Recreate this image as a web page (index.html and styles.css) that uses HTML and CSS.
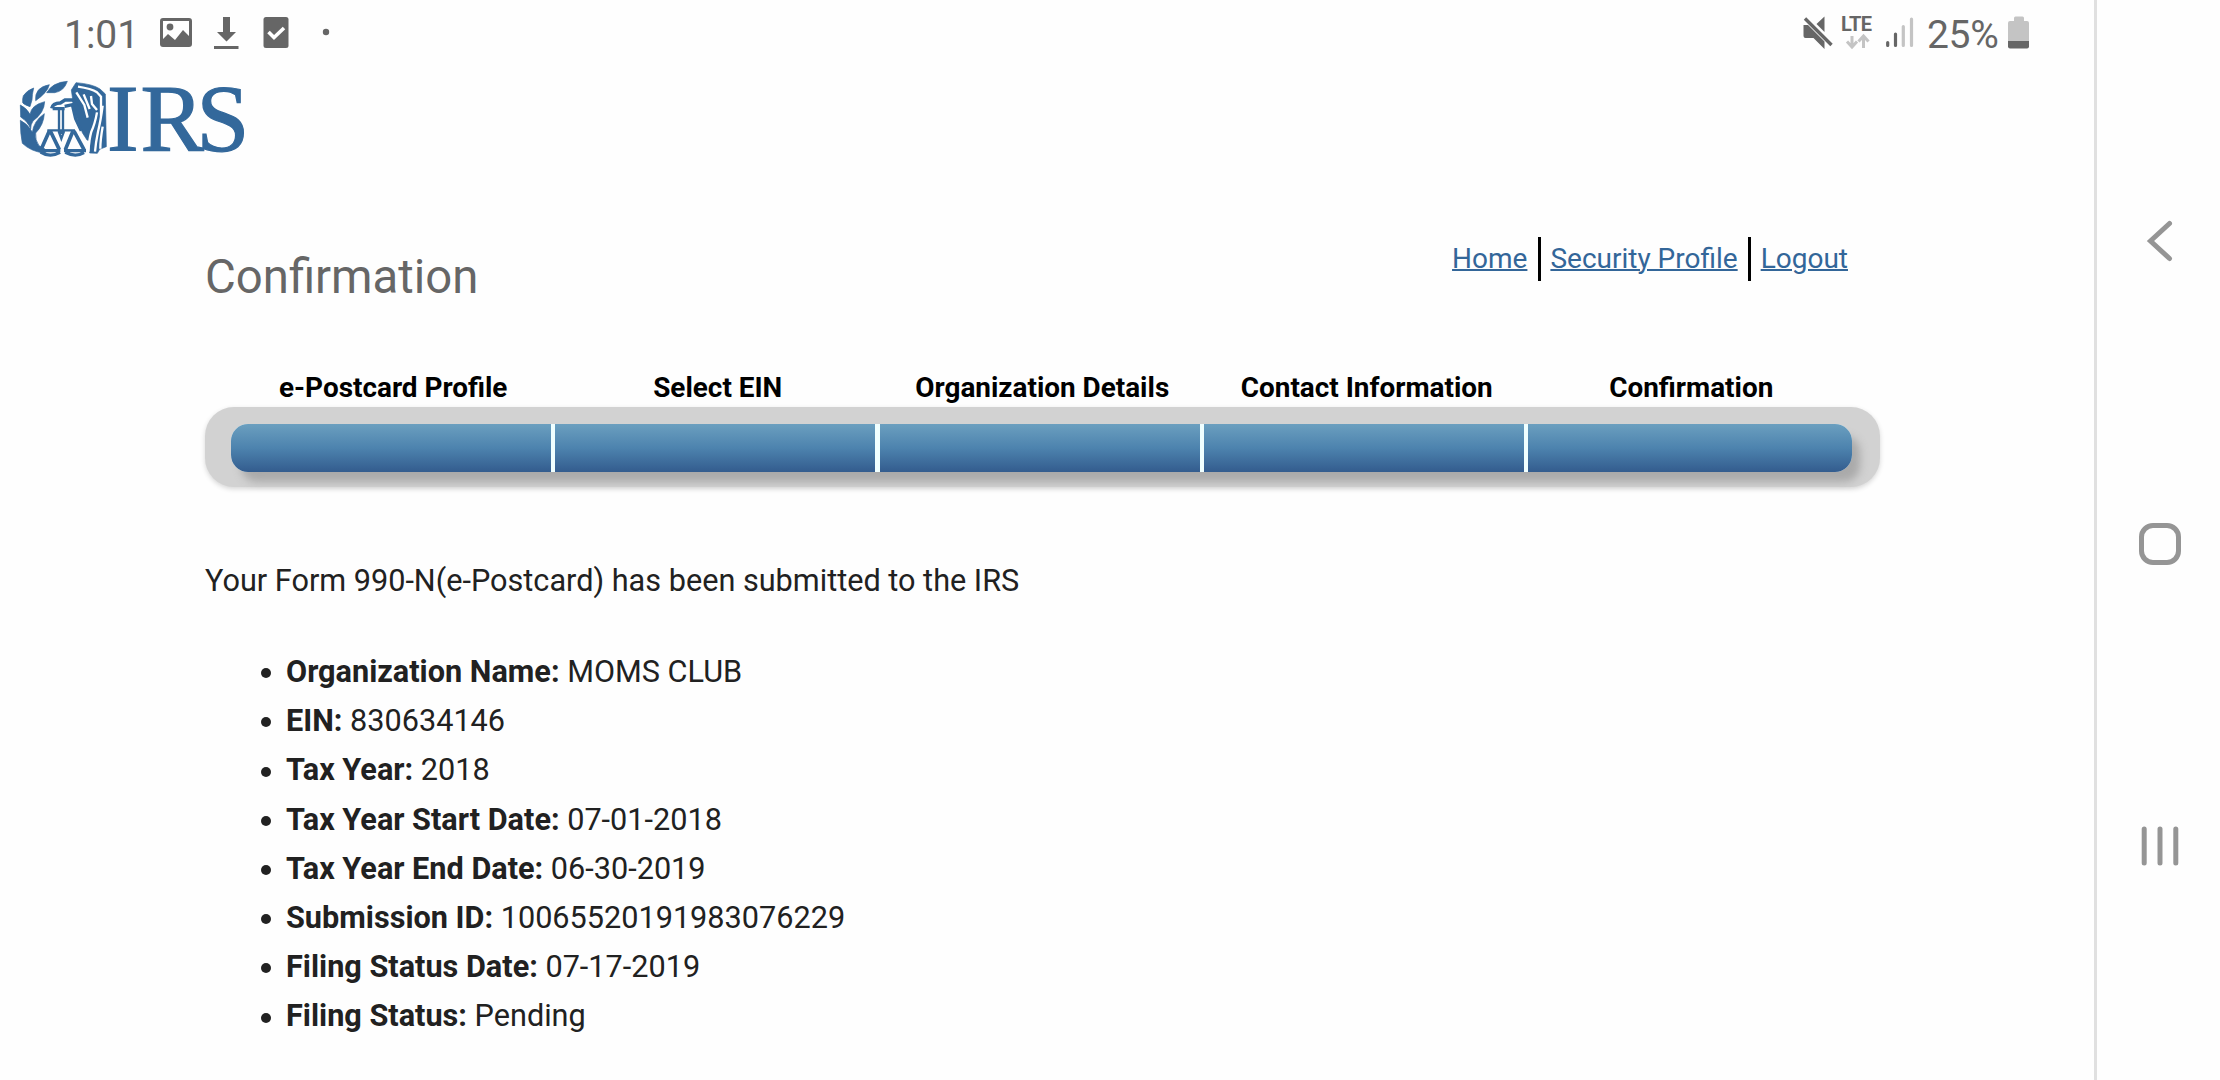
FILE: index.html
```html
<!DOCTYPE html>
<html lang="en">
<head>
<meta charset="utf-8">
<title>Confirmation</title>
<link rel="stylesheet" href="styles.css">
</head>
<body>
<div class="screen">
  <div class="page">
    <div class="status">
      <div class="status-left">
        <span class="clock">1:01</span>
        <svg class="notify" width="180" height="34" viewBox="160 16 180 34" fill="#666">
          <path fill-rule="evenodd" d="M163 18h26q3 0 3 3v23q0 3-3 3h-26q-3 0-3-3V21q0-3 3-3zM163 21v18l5-5 7 6 8-10 6 6V21z"/>
          <circle cx="170" cy="27" r="3.4"/>
          <path d="M223 17h7v15h6l-9.500 9.500L217 32h6zM214 46h24.500v3H214z"/>
          <rect x="263.500" y="17" width="25" height="31" rx="2.500"/>
          <path d="M268.500 32l5.500 5.500 10-9.500" fill="none" stroke="#fff" stroke-width="3.600"/>
          <circle cx="326" cy="32" r="3.200"/>
        </svg>
      </div>
      <div class="status-right">
        <svg width="120" height="34" viewBox="1800 16 120 34">
          <path fill="#666" d="M1803.500 25h4.500l16.500 16.500V49l-11-11h-8q-2 0-2-2v-9zM1816.500 24l8-7.500v15.500z"/>
          <path d="M1805 18.500L1831.500 45" stroke="#666" stroke-width="3.300"/>
          <text class="lte" x="1841" y="31" textLength="31">LTE</text>
          <path d="M1852 36v11M1847 41.500l5 5.500 5-5.500M1863.500 48V36M1858.500 41.500l5-5.500 5 5.500" fill="none" stroke="#c4c4c4" stroke-width="3"/>
          <g fill="none" stroke-width="3.200" stroke-linecap="round">
            <path stroke="#666" d="M1887.700 42.500v3M1895.500 34v11.500"/>
            <path stroke="#c4c4c4" d="M1903.300 26.500v19M1911.500 19v26.500"/>
          </g>
        </svg>
        <span class="percent">25%</span>
        <svg width="22" height="34" viewBox="2008 16 22 34">
          <path fill="#c4c4c4" d="M2014 21v-3q0-1.500 1.500-1.500h7q1.500 0 1.500 1.500v3h3q2 0 2 2v18h-21V23q0-2 2-2z"/>
          <path fill="#666" d="M2008 41h21v5.500q0 2-2 2h-17q-2 0-2-2z"/>
        </svg>
      </div>
    </div>

    <div class="brand">
      <svg width="232" height="82" viewBox="18 78 232 82" role="img" aria-label="IRS">
        <g transform="translate(10 75) scale(.33333)" fill="#33689b" stroke="#33689b" stroke-width="2">
          <path d="M40 62q12-17 31-23-5 20-5 36l-6 20q-20-7-22-12-1-12 2-21zM77 77q-4-40 41-48-5 23-41 48zM110 53q18-31 62-34-10 30-38 34z"/>
          <path d="M31 90q20 10 29 28 4-28 44-38-1 33-35 58-7 10-7 24-8-22-30-36z"/>
          <path d="M31 136q24 12 36 36 4-34 36-56-2 34-26 58-2 22 10 38l18 10-8 11q-34-4-60-28-6-28-6-69z"/>
          <path d="M184 45l14-22q50 4 72 19l16 15 3 158-20 8-7 12-23-1 2-36-10-3-14-22-24-66z"/>
        </g>
        <g transform="translate(10 75) scale(.33333)" fill="none" stroke="#fff" stroke-width="7">
          <path d="M204 35q40 6 57 17l12 13v62M199 52l24 38 10 38M221 58l18 44M243 63l3 24 15 18M261 112q-6 34-17 58-7 25-9 60M278 92q-6 46-14 78-7 34-9 60M278 155q-7 40-7 66"/>
        </g>
        <g transform="translate(10 75) scale(.33333)" fill="none" stroke="#33689b" stroke-width="10">
          <path d="M125 100q3-15 26-16l14-9h24l16 28M128 101h36M164 94l23-5 10 42 17 36"/>
          <path d="M147 105v62M159 105v62M112 166h40l2 10 3-10h38M146 169l8 22 8-22" stroke-width="7"/>
          <path d="M118 168l-25 56M121 168l27 56M189 168l-23 56M192 168l30 56" stroke-width="11"/>
          <path d="M86 227h65M162 227h66M92 231q28 18 58 1M166 232q30 16 56 1" stroke-width="10"/>
        </g>
        <text class="wordmark" x="107 140.500 196.500" y="150.500">IRS</text>
      </svg>
    </div>

    <main class="content">
      <div class="top">
        <h1>Confirmation</h1>
        <nav class="links"><a href="#">Home</a><i></i><a href="#">Security Profile</a><i></i><a href="#">Logout</a></nav>
      </div>
      <div class="labels">
        <span>e-Postcard Profile</span><span>Select EIN</span><span>Organization Details</span><span>Contact Information</span><span>Confirmation</span>
      </div>
      <div class="track">
        <div class="bar"><b></b><b></b><b></b><b></b><b></b></div>
      </div>
      <p class="message">Your Form 990-N(e-Postcard) has been submitted to the IRS</p>
      <ul class="details">
        <li><strong>Organization Name:</strong> MOMS CLUB</li>
        <li><strong>EIN:</strong> 830634146</li>
        <li><strong>Tax Year:</strong> 2018</li>
        <li><strong>Tax Year Start Date:</strong> 07-01-2018</li>
        <li><strong>Tax Year End Date:</strong> 06-30-2019</li>
        <li><strong>Submission ID:</strong> 10065520191983076229</li>
        <li><strong>Filing Status Date:</strong> 07-17-2019</li>
        <li><strong>Filing Status:</strong> Pending</li>
      </ul>
    </main>
  </div>

  <aside class="softkeys">
    <svg width="46" height="46" viewBox="0 0 46 46"><path d="M32.500 5.500L13.500 23l19 17.500" stroke-linecap="round"/></svg>
    <svg width="46" height="46" viewBox="0 0 46 46"><rect x="4.500" y="4.500" width="37" height="37" rx="11.500"/></svg>
    <svg width="46" height="46" viewBox="0 0 46 46"><path d="M7.200 6v34M23 6v34M38.800 6v34" stroke-linecap="round"/></svg>
  </aside>
</div>
</body>
</html>
```
FILE: styles.css
```css
* { box-sizing: border-box; }
body {
  margin: 0;
  background: #fefefe;
  color: #212121;
  font-family: Roboto, sans-serif;
}
.screen { display: flex; width: 2220px; height: 1080px; overflow: hidden; }
.page { width: 2094px; }

.status {
  display: flex;
  justify-content: space-between;
  height: 78px;
  padding: 16px 64px 0 64px;
  color: #666;
  font-size: 39px;
  line-height: 38px;
}
.status-left, .status-right { display: flex; align-items: flex-start; }
.status svg { flex: none; overflow: visible; }
.clock { width: 96px; }
.percent { width: 88px; padding-left: 7px; letter-spacing: -0.3px; }
.lte { font: 700 20px Roboto, sans-serif; fill: #666; }

.brand { height: 82px; padding-left: 18px; }
.brand svg { display: block; overflow: visible; }
.wordmark {
  font: 95px "Liberation Serif", serif;
  fill: #33689b;
  stroke: #33689b;
  stroke-width: 1.2px;
}

.content { width: 1880px; padding-left: 205px; }
.top { display: flex; justify-content: space-between; height: 210px; padding: 77px 32px 0 0; }
h1 { margin: 12px 0 0; font-size: 47.3px; line-height: 57px; font-weight: 400; color: #666; }
.links { display: flex; height: 44px; line-height: 44px; font-size: 28px; }
.links a { color: #336699; text-decoration: underline; text-decoration-thickness: 2px; }
.links i { width: 3px; margin: 0 9px 0 11px; background: #000; }
.links i:last-of-type { margin: 0 10px; }

.labels {
  display: grid;
  grid-template-columns: repeat(5, 324.5px);
  height: 37px;
  padding-left: 26px;
  text-align: center;
  font-size: 27.9px;
  line-height: 36px;
  font-weight: 700;
  color: #000;
}
.track {
  height: 80px;
  padding: 17px 28px 0 26px;
  border-radius: 29px;
  background: #d2d2d2;
  box-shadow: 0 2px 5px rgba(0, 0, 0, .16);
}
.bar {
  display: grid;
  grid-template-columns: repeat(4, 320px) 1fr;
  gap: 4.3px;
  height: 48px;
  border-radius: 17px;
  background: #f0ffff;
  box-shadow: 9px 11px 8px -1px #aaa;
}
.bar b { background: linear-gradient(#6b9fbf, #4d83ae 50%, #335c8e); }
.bar b:first-child { border-radius: 17px 0 0 17px; }
.bar b:last-child { border-radius: 0 17px 17px 0; }

.message { margin: 76px 0 0; font-size: 30.65px; line-height: 36px; }
.details { margin: 48px 0 0; padding: 0 0 0 81px; list-style: none; font-size: 30.65px; line-height: 49.2px; }
.details li { display: flex; align-items: center; white-space: pre; }
.details li::before {
  content: "";
  width: 10px;
  height: 10px;
  margin: 3px 15px 0 -25px;
  border-radius: 50%;
  background: #212121;
}

.softkeys {
  display: flex;
  flex-direction: column;
  align-items: center;
  justify-content: space-between;
  width: 126px;
  padding: 218px 0 211px 3px;
  border-left: 3px solid #e0e0e0;
}
.softkeys svg { fill: none; stroke: #959595; stroke-width: 5; }
```
